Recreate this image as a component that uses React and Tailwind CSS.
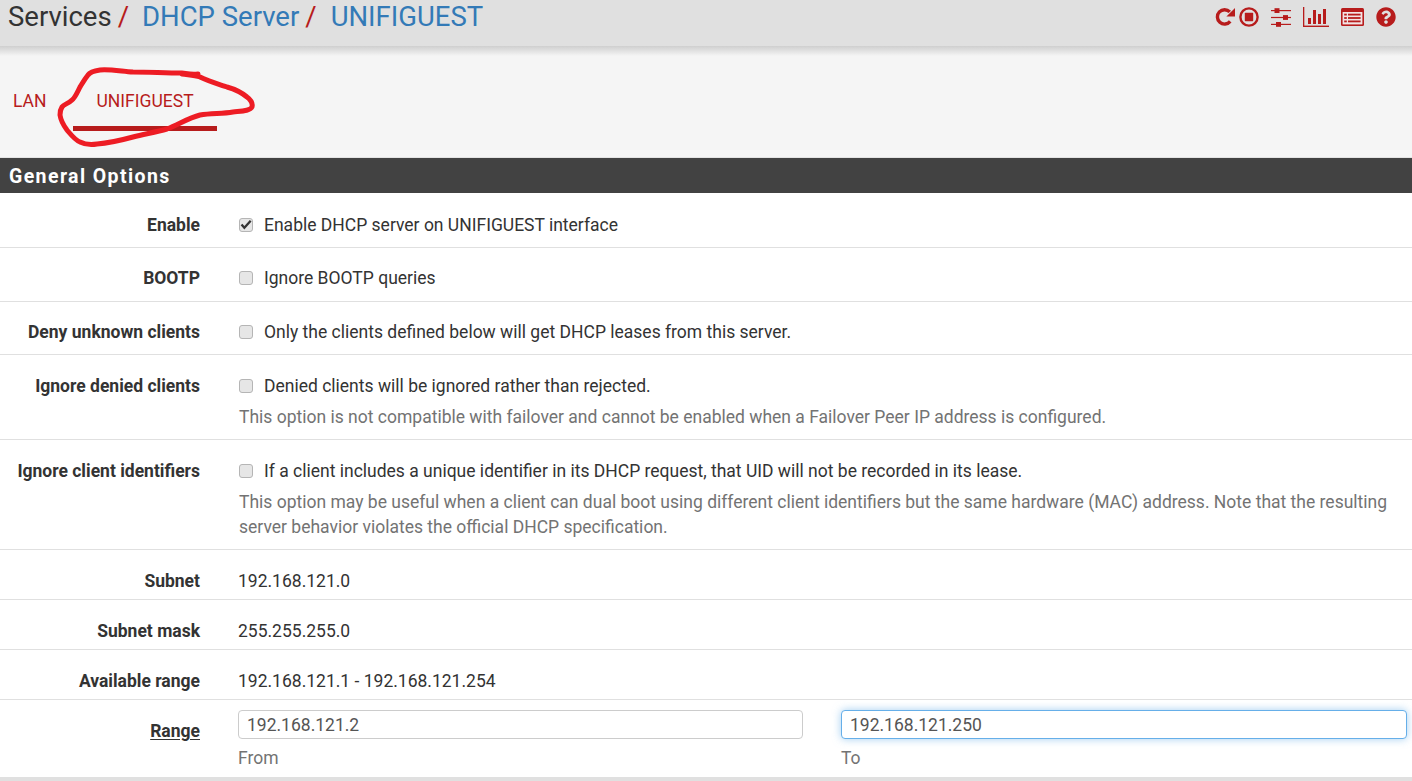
import React from "react";
import { FaQuestionCircle } from "react-icons/fa";

const RED = "#b71c1c";

function Redo() {
  return (
    <svg width="20" height="20" viewBox="0 0 20 20" fill={RED}>
      <path d="M15.2 14.4 A7.2 7.2 0 1 1 14.8 4.9" fill="none" stroke={RED} strokeWidth="3.4" />
      <path d="M20 1 L20 9.6 L11.4 9.6 Z" />
    </svg>
  );
}

function StopCircle() {
  return (
    <svg width="20" height="20" viewBox="0 0 20 20" fill={RED}>
      <circle cx="10" cy="10" r="8.6" fill="none" stroke={RED} strokeWidth="2.4" />
      <rect x="5.8" y="5.8" width="8.4" height="8.4" rx="0.6" />
    </svg>
  );
}

function Sliders() {
  return (
    <svg width="20" height="19" viewBox="0 0 20 19" fill={RED}>
      <rect x="0" y="2" width="20" height="1.2" />
      <rect x="0" y="8.9" width="20" height="1.2" />
      <rect x="0" y="15.8" width="20" height="1.2" />
      <rect x="3.5" y="0.2" width="5" height="4.8" />
      <rect x="12" y="7.1" width="5" height="4.8" />
      <rect x="5" y="14" width="5" height="4.8" />
    </svg>
  );
}

function BarChart() {
  return (
    <svg width="26" height="20" viewBox="0 0 26 20" fill={RED}>
      <rect x="0" y="0" width="1.3" height="20" />
      <rect x="0" y="18.6" width="26" height="1.4" />
      <rect x="5" y="11" width="3" height="6" />
      <rect x="10" y="3" width="3" height="14" />
      <rect x="15" y="7" width="3" height="10" />
      <rect x="20" y="2" width="3" height="15" />
    </svg>
  );
}

function ListAlt() {
  return (
    <svg width="23" height="18" viewBox="0 0 23 18">
      <rect x="0" y="0" width="23" height="18" rx="1.5" fill={RED} />
      <rect x="1.6" y="4" width="19.8" height="12.4" fill="#f3e3e3" />
      <g fill={RED}>
        <rect x="3.2" y="5.7" width="2.6" height="1.8" />
        <rect x="3.2" y="9.1" width="2.6" height="1.8" />
        <rect x="3.2" y="12.5" width="2.6" height="1.8" />
        <rect x="7" y="5.7" width="12.6" height="1.8" />
        <rect x="7" y="9.1" width="12.6" height="1.8" />
        <rect x="7" y="12.5" width="12.6" height="1.8" />
      </g>
    </svg>
  );
}

function Check({ checked }) {
  return (
    <span className="relative w-[14px] h-[14px] shrink-0 rounded-[3px] border border-[#b5b5b5] bg-[#e6e6e6] flex items-center justify-center">
      {checked && (
        <svg width="12" height="11" viewBox="0 0 11 10" className="absolute left-0 top-0">
          <path d="M1.4 5 L4 8 L9.8 1.6" fill="none" stroke="#333" strokeWidth="2.1" />
        </svg>
      )}
    </span>
  );
}

function Row({ label, className = "", children }) {
  return (
    <div className={"flex border-b border-[#e0e0e0] " + className}>
      <div className="w-[200px] shrink-0 text-right font-bold text-[17.5px] leading-[22px] text-[#333]">{label}</div>
      <div className="flex-1 min-w-0 pl-[38px] pr-[5px] text-[17.5px] leading-[22px] text-[#333]">{children}</div>
    </div>
  );
}

function CheckLine({ checked, children }) {
  return (
    <div className="flex items-center h-[22px] pl-px">
      <Check checked={checked} />
      <span className="ml-[11px] whitespace-nowrap">{children}</span>
    </div>
  );
}

function Help({ children }) {
  return <p className="mt-[8px] pl-px leading-[25px] text-[#737373] text-[17.5px]">{children}</p>;
}

export default function App() {
  return (
    <div className="relative w-[1412px] h-[781px] overflow-hidden bg-white" style={{ fontFamily: "Roboto, sans-serif" }}>
      <header className="h-[46px] bg-[#e0e0e0] flex items-start justify-between pl-[8px] pr-[16px]">
        <h1 className="text-[27.5px] leading-[34px] whitespace-nowrap text-[#333] flex">
          <span>Services</span>
          <span className="text-[#b71c1c] ml-[6px]">/</span>
          <span className="text-[#337ab7] ml-[13px]">DHCP Server</span>
          <span className="text-[#b71c1c] ml-[6px]">/</span>
          <span className="text-[#337ab7] ml-[14px]">UNIFIGUEST</span>
        </h1>
        <div className="flex items-center h-[34px] text-[#b71c1c]">
          <span className="flex"><Redo /></span>
          <span className="ml-[4px] flex"><StopCircle /></span>
          <span className="ml-[12px] flex"><Sliders /></span>
          <span className="ml-[12px] flex"><BarChart /></span>
          <span className="ml-[12px] flex"><ListAlt /></span>
          <FaQuestionCircle size={20} className="ml-[12px]" />
        </div>
      </header>
      <div className="h-[10px] bg-gradient-to-b from-[#cfcfcf] to-[#f5f5f5]" />
      <nav className="h-[102px] bg-[#f5f5f5] border-b border-[#e4e4e4] flex items-start text-[17.5px] text-[#b71c1c]">
        <a className="ml-[13px] mt-[35px] leading-[20px]">LAN</a>
        <div className="ml-[26px] w-[144px] h-[75px] border-b-[5px] border-[#b71c1c] pl-[24px] pt-[35px] leading-[20px]">UNIFIGUEST</div>
      </nav>
      <div className="h-[35px] bg-[#424242] text-white font-bold text-[19.5px] leading-[38px] pl-[9px] tracking-[1.4px]">General Options</div>

      <Row label="Enable" className="h-[55px] pt-[21px]"><CheckLine checked>Enable DHCP server on UNIFIGUEST interface</CheckLine></Row>
      <Row label="BOOTP" className="h-[54px] pt-[19px]"><CheckLine>Ignore BOOTP queries</CheckLine></Row>
      <Row label="Deny unknown clients" className="h-[53px] pt-[19px]"><CheckLine>Only the clients defined below will get DHCP leases from this server.</CheckLine></Row>
      <Row label="Ignore denied clients" className="h-[85px] pt-[20px]">
        <CheckLine>Denied clients will be ignored rather than rejected.</CheckLine>
        <Help>This option is not compatible with failover and cannot be enabled when a Failover Peer IP address is configured.</Help>
      </Row>
      <Row label="Ignore client identifiers" className="h-[110px] pt-[20px]">
        <CheckLine>If a client includes a unique identifier in its DHCP request, that UID will not be recorded in its lease.</CheckLine>
        <Help>This option may be useful when a client can dual boot using different client identifiers but the same hardware (MAC) address. Note that the resulting server behavior violates the official DHCP specification.</Help>
      </Row>
      <Row label="Subnet" className="h-[50px] pt-[20px]">192.168.121.0</Row>
      <Row label="Subnet mask" className="h-[50px] pt-[20px]">255.255.255.0</Row>
      <Row label="Available range" className="h-[50px] pt-[20px]">192.168.121.1 - 192.168.121.254</Row>
      <div className="flex h-[77px] pt-[10px]">
        <div className="w-[200px] shrink-0 text-right font-bold text-[17.5px] leading-[22px] text-[#333] pt-[10px]">
          <span className="underline underline-offset-2">Range</span>
        </div>
        <div className="flex-1 min-w-0 flex pl-[38px] pr-[5px] text-[17.5px]">
          <div className="w-[565px]">
            <input readOnly value="192.168.121.2" className="block w-full h-[29px] rounded-[4px] border border-[#cccccc] bg-white px-[8px] text-[#555] outline-none" />
            <div className="mt-[7px] leading-[24px] text-[#737373]">From</div>
          </div>
          <div className="w-[566px] ml-[38px]">
            <input readOnly value="192.168.121.250" className="block w-full h-[29px] rounded-[4px] border border-[#66afe9] bg-white px-[8px] text-[#555] outline-none shadow-[0_0_8px_rgba(102,175,233,0.6)]" />
            <div className="mt-[7px] leading-[24px] text-[#737373]">To</div>
          </div>
        </div>
      </div>
      <div className="h-[4px] bg-[#e0e0e0]" />

      <svg className="absolute left-0 top-0 pointer-events-none" width="280" height="160" viewBox="0 0 280 160">
        <path
          d="M198 74 C190 75 185 73 182 73 C165 73 150 72 133 72 C120 71 108 69 100 70 C93 71 90 72 88 75 C84 80 82 84 80 87 C77 93 75 98 72 100 C68 104 64 104 62 107 C60 110 60 112 60 115 C61 122 64 126 67 130 C72 136 75 140 80 142 C86 145 91 145 97 144 C110 143 122 140 133 137 C145 134 156 132 167 129 C178 125 188 118 200 115 C212 113 222 114 233 112 C242 111 250 111 252 107 C253 103 251 100 247 97 C241 92 234 89 227 87 C218 84 208 81 200 77 C194 75 188 75 182 74"
          fill="none"
          stroke="#ed1c24"
          strokeWidth="5"
          strokeLinecap="round"
          strokeLinejoin="round"
        />
      </svg>
    </div>
  );
}
